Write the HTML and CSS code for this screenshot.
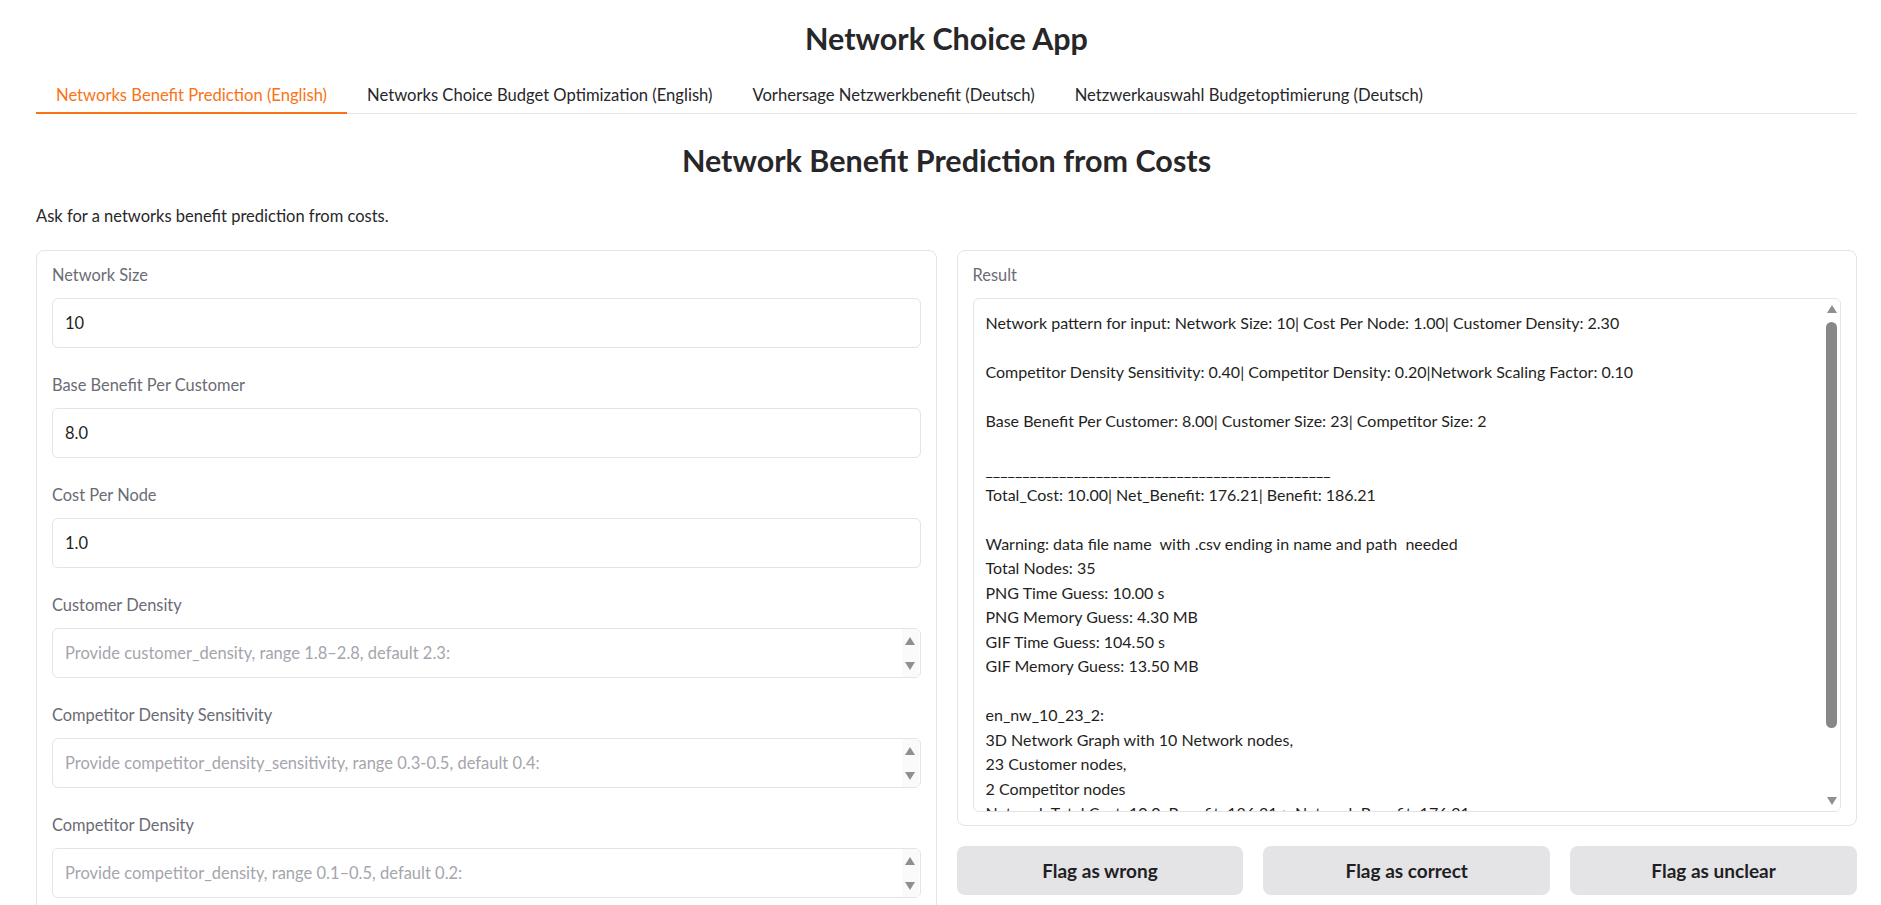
FILE: index.html
```html
<!DOCTYPE html>
<html lang="en">
<head>
<meta charset="utf-8">
<title>Network Choice App</title>
<link rel="stylesheet" href="styles.css">
</head>
<body>
<div class="app">
  <h1 class="title">Network Choice App</h1>
  <nav class="tabs">
    <div class="tab active">Networks Benefit Prediction (English)</div>
    <div class="tab">Networks Choice Budget Optimization (English)</div>
    <div class="tab">Vorhersage Netzwerkbenefit (Deutsch)</div>
    <div class="tab">Netzwerkauswahl Budgetoptimierung (Deutsch)</div>
  </nav>
  <h2 class="page-heading">Network Benefit Prediction from Costs</h2>
  <p class="desc">Ask for a networks benefit prediction from costs.</p>
  <div class="columns">
    <div class="panel">
      <div class="field">
        <div class="label">Network Size</div>
        <div class="input"><span class="value">10</span></div>
      </div>
      <div class="field">
        <div class="label">Base Benefit Per Customer</div>
        <div class="input"><span class="value">8.0</span></div>
      </div>
      <div class="field">
        <div class="label">Cost Per Node</div>
        <div class="input"><span class="value">1.0</span></div>
      </div>
      <div class="field">
        <div class="label">Customer Density</div>
        <div class="input">
          <span class="placeholder">Provide customer_density, range 1.8–2.8, default 2.3:</span>
          <span class="spin"><i class="tri-up"></i><i class="tri-down"></i></span>
        </div>
      </div>
      <div class="field">
        <div class="label">Competitor Density Sensitivity</div>
        <div class="input">
          <span class="placeholder">Provide competitor_density_sensitivity, range 0.3-0.5, default 0.4:</span>
          <span class="spin"><i class="tri-up"></i><i class="tri-down"></i></span>
        </div>
      </div>
      <div class="field">
        <div class="label">Competitor Density</div>
        <div class="input">
          <span class="placeholder">Provide competitor_density, range 0.1–0.5, default 0.2:</span>
          <span class="spin"><i class="tri-up"></i><i class="tri-down"></i></span>
        </div>
      </div>
    </div>
    <div class="right">
      <div class="panel">
        <div class="field">
          <div class="label">Result</div>
          <div class="result-box">
            <div class="result-text">Network pattern for input: Network Size: 10| Cost Per Node: 1.00| Customer Density: 2.30

Competitor Density Sensitivity: 0.40| Competitor Density: 0.20|Network Scaling Factor: 0.10

Base Benefit Per Customer: 8.00| Customer Size: 23| Competitor Size: 2

_______________________________________________
Total_Cost: 10.00| Net_Benefit: 176.21| Benefit: 186.21

Warning: data file name  with .csv ending in name and path  needed
Total Nodes: 35
PNG Time Guess: 10.00 s
PNG Memory Guess: 4.30 MB
GIF Time Guess: 104.50 s
GIF Memory Guess: 13.50 MB

en_nw_10_23_2:
3D Network Graph with 10 Network nodes,
23 Customer nodes,
2 Competitor nodes
Network Total Cost: 10.0, Benefit: 186.21 &gt; Network Benefit: 176.21
</div>
            <div class="scrollbar">
              <i class="tri-up sb-arrow"></i>
              <div class="thumb"></div>
              <i class="tri-down sb-arrow"></i>
            </div>
          </div>
        </div>
      </div>
      <div class="buttons">
        <button class="btn">Flag as wrong</button>
        <button class="btn">Flag as correct</button>
        <button class="btn">Flag as unclear</button>
      </div>
    </div>
  </div>
</div>
</body>
</html>
```
FILE: styles.css
```css
html { overflow: hidden; }
body {
  margin: 0;
  font-family: Lato, "Liberation Sans", sans-serif;
  font-size: 16.5px;
  color: #27272a;
  background: #ffffff;
}
.app {
  padding: 20px 24px 0 36px;
}
.title {
  margin: 0;
  text-align: center;
  font-size: 30.5px;
  line-height: 36px;
  font-weight: 700;
}
.tabs {
  display: flex;
  margin-top: 19px;
  border-bottom: 1px solid #e4e4e7;
}
.tab {
  padding: 9px 20px 6px;
  line-height: 22px;
  font-size: 16.6px;
  color: #27272a;
  border-bottom: 2px solid transparent;
  margin-bottom: -1px;
}
.tab.active {
  color: #f97316;
  border-bottom-color: #f97316;
}
.page-heading {
  margin: 28px 0 0;
  text-align: center;
  font-size: 30.5px;
  line-height: 36px;
  font-weight: 700;
}
.desc {
  margin: 26px 0 0;
  line-height: 24px;
  font-size: 16.5px;
}
.columns {
  display: grid;
  grid-template-columns: 1fr 1fr;
  gap: 20px;
  margin-top: 22px;
  align-items: start;
}
.panel {
  border: 1px solid #e4e4e7;
  border-radius: 8px;
  background: #fff;
}
.field {
  padding: 13px 15px 13px;
}
.label {
  line-height: 22px;
  margin-bottom: 12px;
  color: #6b6b74;
  font-size: 16.4px;
}
.input {
  display: flex;
  align-items: stretch;
  height: 48px;
  border: 1px solid #e4e4e7;
  border-radius: 6px;
  background: #fff;
}
.value, .placeholder {
  flex: 1;
  padding: 0 12px;
  line-height: 48px;
  font-size: 16.5px;
}
.value { color: #1f1f23; }
.placeholder { color: #a5a5ad; }
.spin {
  width: 17px;
  display: flex;
  flex-direction: column;
  align-items: center;
  justify-content: space-between;
  padding: 8px 0 7px;
  background: #fafafa;
  margin-right: 1px;
}
.tri-up, .tri-down {
  display: block;
  width: 0;
  height: 0;
  border-left: 5px solid transparent;
  border-right: 5px solid transparent;
}
.tri-up { border-bottom: 8px solid #8f8f8f; }
.tri-down { border-top: 8px solid #8f8f8f; }
.result-box {
  display: flex;
  height: 512px;
  border: 1px solid #e4e4e7;
  border-radius: 6px;
  overflow: hidden;
}
.result-text {
  flex: 1;
  padding: 12px;
  white-space: pre-wrap;
  line-height: 24.5px;
  font-size: 16px;
  color: #1f1f23;
  overflow: hidden;
}
.scrollbar {
  width: 17px;
  display: flex;
  flex-direction: column;
  align-items: center;
  background: #fff;
}
.sb-arrow { margin-top: 6px; }
.scrollbar .tri-down { margin-top: auto; margin-bottom: 6px; }
.thumb {
  width: 11px;
  height: 406px;
  margin-top: 9px;
  border-radius: 6px;
  background: #878787;
}
.buttons {
  display: grid;
  grid-template-columns: 1fr 1fr 1fr;
  gap: 20px;
  margin-top: 20px;
}
.btn {
  height: 49px;
  border: none;
  border-radius: 8px;
  background: #e4e4e7;
  font-family: Lato, "Liberation Sans", sans-serif;
  font-weight: 700;
  font-size: 19px;
  color: #1f1f23;
}
```
